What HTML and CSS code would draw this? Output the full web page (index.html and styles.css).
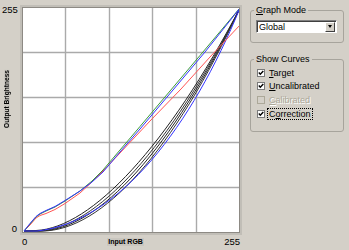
FILE: index.html
```html
<!DOCTYPE html>
<html lang="en">
<head>
    <meta charset="UTF-8">
    <title>Curves</title>
    <link rel="stylesheet" href="styles.css">
</head>
<body>
    <div class="window">
        <div class="graph">
            <div class="y-axis">
                <span class="tick top">255</span>
                <span class="axis-title vertical">Output Brightness</span>
                <span class="tick bottom">0</span>
            </div>
            <div class="plot">
                <div class="canvas">
                    <svg viewBox="23 8 216 224" width="216" height="224">
                        <g stroke="#aaaaaa" stroke-width="1.4">
                            <line x1="65.5" y1="8" x2="65.5" y2="232"/>
                            <line x1="109.5" y1="8" x2="109.5" y2="232"/>
                            <line x1="152.5" y1="8" x2="152.5" y2="232"/>
                            <line x1="196.5" y1="8" x2="196.5" y2="232"/>
                            <line x1="23" y1="52.5" x2="239" y2="52.5"/>
                            <line x1="23" y1="97.5" x2="239" y2="97.5"/>
                            <line x1="23" y1="142.5" x2="239" y2="142.5"/>
                            <line x1="23" y1="187.5" x2="239" y2="187.5"/>
                        </g>
                        <g fill="none" stroke-width="1">
                            <path stroke="#222" d="M24,231 L36,230.5 C92,228 168,145 240,8"/>
                            <path stroke="#333" d="M24,231 L38,231 C96,229 170,147 240,8"/>
                            <path stroke="#222" d="M24,231 L40,231 C99,230 172,149 240,8"/>
                            <path stroke="#333" d="M24,231 L42,231 C102,231 174,151 240,8"/>
                            <path stroke="#3333ff" d="M24,231 L37,231 C120,222 192,125 240,8"/>
                            <polyline stroke="#ff5555" points="24,231 30,225 36,218 40,215.5 46,213.5 55,209.5 65,203.5 80,193 92,182 103,171 120,153 150,121 181,89 210,57 240,25"/>
                            <polyline stroke="#3a9a3a" points="24,231 30,224 36,217 40,214 46,211 55,207 65,201 80,191 92,181 103,170 120,150 140,126.5 170,91 200,55.5 239,9"/>
                            <polyline stroke="#3333ff" points="24,231 30,223.5 36,216.5 40,213.5 46,210.5 55,206.5 65,200.5 80,191 92,182 103,172 120,152 140,129 173,90 205,52 240,8"/>
                        </g>
                    </svg>
                </div>
            </div>
            <div class="x-axis">
                <span class="tick zero">0</span>
                <span class="axis-title">Input RGB</span>
                <span class="tick max">255</span>
            </div>
        </div>

        <div class="panel">
            <fieldset class="group mode">
                <legend><u>G</u>raph Mode</legend>
                <div class="select">
                    <span>Global</span>
                    <span class="arrow"></span>
                </div>
            </fieldset>

            <fieldset class="group curves">
                <legend>Show Curves</legend>
                <div class="check">
                    <span class="box"><svg viewBox="0 0 6 6" width="6" height="6"><polyline points="0.8,2.6 2.3,4.2 5.3,1" fill="none" stroke="#000" stroke-width="1.4"/></svg></span>
                    <span><u>T</u>arget</span>
                </div>
                <div class="check">
                    <span class="box"><svg viewBox="0 0 6 6" width="6" height="6"><polyline points="0.8,2.6 2.3,4.2 5.3,1" fill="none" stroke="#000" stroke-width="1.4"/></svg></span>
                    <span><u>U</u>ncalibrated</span>
                </div>
                <div class="check disabled">
                    <span class="box"></span>
                    <span><u>C</u>alibrated</span>
                </div>
                <div class="check">
                    <span class="box"><svg viewBox="0 0 6 6" width="6" height="6"><polyline points="0.8,2.6 2.3,4.2 5.3,1" fill="none" stroke="#000" stroke-width="1.4"/></svg></span>
                    <span class="focus">C<u>o</u>rrection</span>
                </div>
            </fieldset>
        </div>
    </div>
</body>
</html>
```

FILE: styles.css
```css
body {
    margin: 0;
    background: #d4d0c8;
    font-family: "Liberation Sans", Arial, sans-serif;
    font-size: 9px;
    color: #000;
}
.window {
    display: flex;
    width: 349px;
    height: 250px;
    overflow: hidden;
}
.graph {
    display: grid;
    grid-template-columns: 20px 222px;
    grid-template-rows: 230px 15px;
    margin-top: 5px;
}
.y-axis {
    display: flex;
    flex-direction: column;
}
.tick {
    font-size: 9.5px;
    line-height: 10px;
}
.y-axis .top {
    padding-left: 2px;
}
.y-axis .bottom {
    margin-top: auto;
    margin-bottom: 1px;
    text-align: right;
    padding-right: 3px;
}
.axis-title {
    font-size: 7px;
    font-weight: bold;
    line-height: 8px;
    background: #c9c6bf;
}
.vertical {
    writing-mode: vertical-rl;
    transform: rotate(180deg);
    align-self: flex-start;
    margin: 55px 0 0 4px;
    font-size: 6.6px;
    line-height: 6px;
}
.plot {
    border: 2px solid #c1beb7;
}
.canvas {
    border: 1px solid #8d8a84;
    background: #fff;
    width: 216px;
    height: 224px;
}
.canvas svg {
    display: block;
}
.x-axis {
    grid-column: 2;
    display: flex;
    align-items: flex-start;
    padding-top: 2px;
}
.x-axis .zero {
    margin-left: 2px;
}
.x-axis .axis-title {
    margin-left: 80px;
    margin-top: 1px;
    padding: 0 1px;
}
.x-axis .max {
    margin-left: auto;
    margin-right: 2px;
}
.panel {
    margin-left: 8px;
    padding-top: 5px;
    width: 94px;
}
.group {
    margin: 0;
    border: 1px solid #a7a49c;
    border-radius: 3px;
}
.group legend {
    padding: 0 2px;
    margin-left: -2px;
    line-height: 11px;
}
.mode {
    padding: 4px 6px 9px 5px;
}
.select {
    display: flex;
    align-items: center;
    box-sizing: border-box;
    width: 81px;
    height: 13px;
    padding: 0 1px 0 2px;
    background: #fff;
    border: 1px solid;
    border-color: #808080 #fff #fff #808080;
    box-shadow: inset 1px 1px #404040;
}
.arrow {
    display: flex;
    align-items: center;
    justify-content: center;
    box-sizing: border-box;
    margin-left: auto;
    width: 10px;
    height: 10px;
    background: #d4d0c8;
    border: 1px solid;
    border-color: #fff #404040 #404040 #fff;
}
.arrow::after {
    content: "";
    border-left: 2.5px solid transparent;
    border-right: 2.5px solid transparent;
    border-top: 3px solid #000;
}
.curves {
    margin-top: 11px;
    padding: 1px 6px 11px 5px;
}
.check {
    display: flex;
    align-items: center;
    height: 13.6px;
}
.box {
    display: flex;
    align-items: center;
    justify-content: center;
    box-sizing: border-box;
    width: 8px;
    height: 8px;
    margin: 0 4px 0 1px;
    background: #fff;
    border: 1px solid #7b7b7b;
}
.disabled {
    color: #aca899;
    text-shadow: 1px 1px #fff;
}
.disabled .box {
    background: #d4d0c8;
    border-color: #aca899;
}
.focus {
    outline: 1px dotted #000;
    margin-left: -1px;
    padding: 0 1px;
}
```
